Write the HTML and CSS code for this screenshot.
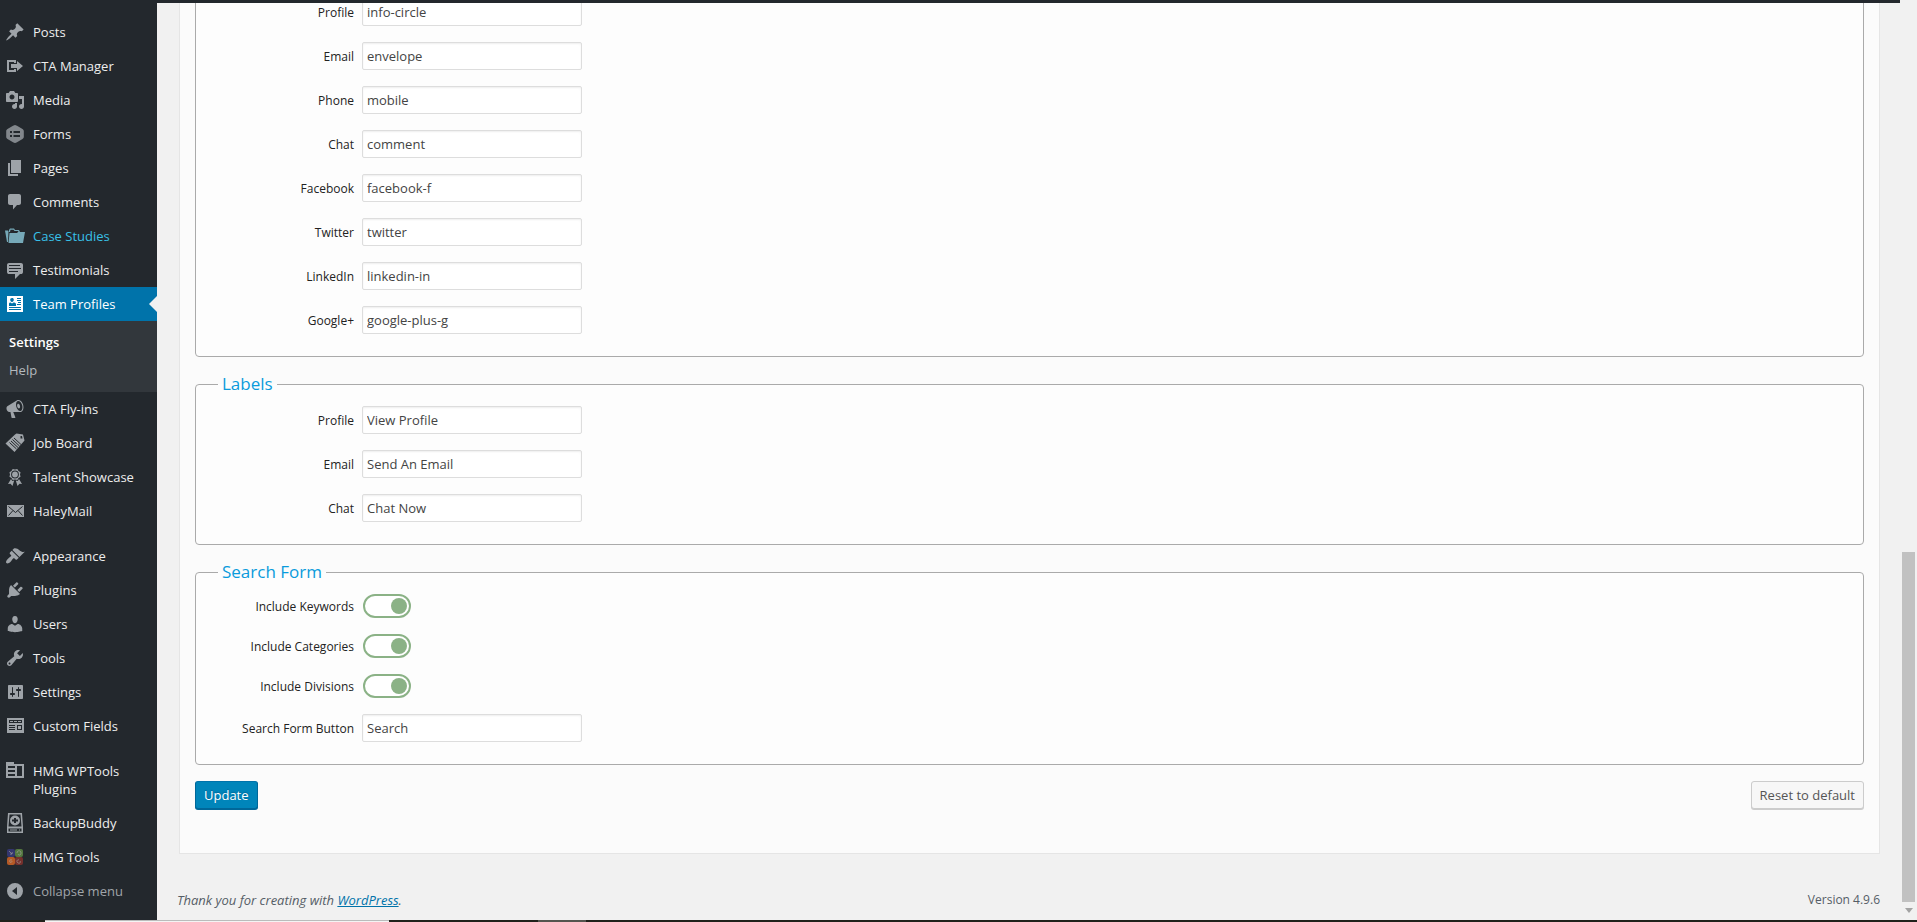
FILE: index.html
```
<!DOCTYPE html>
<html lang="en">
<head>
    <meta charset="UTF-8">
    <meta name="viewport" content="width=device-width, initial-scale=1.0">
    <title>Team Profiles Settings</title>
    <link rel="stylesheet" href="styles.css">
</head>
<body>
    <div class="admin-bar"></div>
    <div class="wrap">
        <nav class="sidebar">
            <ul class="menu">
                <li><a href="#"><svg viewBox="0 0 20 20"><path d="M10.44 3.02l1.82-1.82 6.36 6.35-1.83 1.82c-1.05-.68-2.48-.57-3.41.36l-.75.75c-.92.93-1.04 2.35-.35 3.41l-1.83 1.82-2.41-2.41-2.8 2.79c-.42.42-3.38 2.71-3.8 2.29s1.86-3.39 2.28-3.81l2.79-2.79L4.1 9.36l1.83-1.82c1.05.69 2.48.57 3.4-.36l.75-.75c.93-.92 1.05-2.35.36-3.41z"/></svg><span>Posts</span></a></li>
                <li><a href="#"><svg viewBox="0 0 20 20"><path d="M2 4h9v3H9V6H4v8h5v-1h2v3H2zM6 8h6V5l6 5-6 5v-3H6z"/></svg><span>CTA Manager</span></a></li>
                <li><a href="#"><svg viewBox="0 0 20 20"><path d="M13 11V4c0-.55-.45-1-1-1h-1.67L9 1H5L3.67 3H2c-.55 0-1 .45-1 1v7c0 .55.45 1 1 1h10c.55 0 1-.45 1-1zM7 4.5c1.38 0 2.5 1.12 2.5 2.5S8.38 9.5 7 9.5 4.5 8.38 4.5 7 5.62 4.5 7 4.5zM14 6h5v10.5c0 1.38-1.12 2.5-2.5 2.5S14 17.88 14 16.5s1.12-2.5 2.5-2.5c.17 0 .34.02.5.05V9h-3V6zm-4 8.05V13h2v3.5c0 1.38-1.12 2.5-2.5 2.5S7 17.88 7 16.5 8.12 14 9.5 14c.17 0 .34.02.5.05z"/></svg><span>Media</span></a></li>
                <li><a href="#"><svg class="dim" viewBox="0 0 20 20"><path fill-rule="evenodd" d="M10 1l2 .7 5.5 3.2c.8.5 1.3 1.2 1.3 2v6.2c0 .8-.5 1.5-1.3 2L12 18.3c-1.4.8-2.6.8-4 0l-5.500-3.200c-.8-.5-1.300-1.200-1.300-2V6.900c0-.8.5-1.500 1.300-2L8 1.700zM5 7v2h2V7zm3.500 0v2H15V7zM5 11v2h2v-2zm3.500 0v2H15v-2z"/></svg><span>Forms</span></a></li>
                <li><a href="#"><svg viewBox="0 0 20 20"><path d="M6 15V2h10v13H6zm-1 1h8v2H3V5h2v11z"/></svg><span>Pages</span></a></li>
                <li><a href="#"><svg viewBox="0 0 20 20"><path d="M5 2h9c1.100 0 2 .9 2 2v7c0 1.100-.9 2-2 2h-2l-4 4.500V13H5c-1.100 0-2-.9-2-2V4c0-1.100.9-2 2-2z"/></svg><span>Comments</span></a></li>
                <li class="hover"><a href="#"><svg viewBox="0 0 20 20"><path d="M0 4.500h3l.5 1L3 16H2z"/><path d="M4 6V4l1-1.500h4L10 4h4l1 2h-1.500L13 5H9.500l-1-1.300h-3L5 6z"/><path d="M4.500 7H12l1-1h7l-2 11H3.500z"/></svg><span>Case Studies</span></a></li>
                <li><a href="#"><svg viewBox="0 0 20 20"><path d="M4 3h12c.55 0 1.020.2 1.410.590S18 4.450 18 5v7c0 .55-.2 1.020-.59 1.410S16.550 14 16 14h-1l-5 5v-5H4c-.55 0-1.020-.2-1.410-.59S2 12.550 2 12V5c0-.55.2-1.020.590-1.410S3.450 3 4 3zm11 2H4v1h11V5zm1 3H4v1h12V8zm-3 3H4v1h9v-1z"/></svg><span>Testimonials</span></a></li>
                <li class="current">
                    <a href="#"><svg viewBox="0 0 20 20"><path fill-rule="evenodd" d="M2 2h16v16H2zM7 4c-1.100 0-1.800.8-1.800 1.800S5.900 8 7 8s1.800-1 1.800-2.200S8.100 4 7 4zM4 12h7V9.800C10.500 8.800 9.500 8.500 8.500 8.500L7 9.500l-1.500-1C4.500 8.500 4 9 4 10zM12 4v1h4V4zm0 2v1h4V6zm1 2v1h3V8zm-1 2v1h4v-1zm-8 3v1h12v-1zm0 2v1h12v-1z"/></svg><span>Team Profiles</span></a>
                    <ul class="submenu">
                        <li class="active"><a href="#">Settings</a></li>
                        <li><a href="#">Help</a></li>
                    </ul>
                </li>
                <li><a href="#"><svg viewBox="0 0 20 20"><path d="M18.150 5.940c.46 1.620.380 3.220-.02 4.480-.42 1.280-1.260 2.180-2.300 2.480-.16.060-.26.060-.4.060-.06.020-.12.020-.18.020-.06.020-.14.020-.22.020h-6.800l2.220 5.500c.020.140-.06.260-.14.340-.08.100-.24.160-.34.160H6.950c-.1 0-.26-.06-.34-.16-.08-.08-.16-.2-.14-.34l-1-5.500H4.250l-.02-.02c-.5.060-1.080-.18-1.540-.62s-.88-1.080-1.060-1.880c-.24-.8-.2-1.560-.02-2.200.180-.62.580-1.080 1.060-1.300l.020-.02 9-5.400c.1-.06.180-.1.240-.16.060-.04.140-.08.240-.12.160-.08.280-.12.500-.18 1.040-.3 2.240.100 3.220.980s1.840 2.240 2.260 3.860zm-2.580 5.980h-.02c.4-.1.740-.34 1.040-.7.580-.7.860-1.760.860-3.040 0-.64-.1-1.300-.28-1.980-.34-1.360-1.020-2.500-1.780-3.240s-1.680-1.100-2.460-.88c-.82.220-1.400.960-1.700 2-.32 1.040-.28 2.360.060 3.720.380 1.360 1 2.500 1.800 3.240.780.740 1.620 1.100 2.480.880zm-2.540-7.080c.22-.04.420-.02.620.040.380.160.760.480 1.020 1s.42 1.200.420 1.780c0 .3-.04.560-.12.800-.18.480-.44.840-.86.940-.34.100-.8-.06-1.140-.4s-.64-.86-.78-1.500c-.18-.62-.12-1.240.020-1.720s.48-.84.820-.94z"/></svg><span>CTA Fly-ins</span></a></li>
                <li><a href="#"><svg viewBox="0 0 20 20"><path fill-rule="evenodd" d="M10 1.500L11.500.5 18 1.500l1.500 6L9.500 19 .5 10.500zM15.500 3v2.500h2L17 3z"/><path class="cut" d="M9 5l7 6.500M7.500 6.500l7 6.500M6 8l7 6.500M4.500 9.500l7 6.500"/></svg><span>Job Board</span></a></li>
                <li><a href="#"><svg viewBox="0 0 20 20"><path fill-rule="evenodd" d="M4.460 5.160L5 7.460l-.54 2.290 2.010 1.240L7.700 13l2.300-.54 2.300.540 1.230-2.010 2.010-1.240L15 7.460l.540-2.300-2-1.240-1.240-2.010-2.300.550-2.290-.54-1.250 2zM10 3.600a3.900 3.900 0 110 7.800 3.900 3.900 0 010-7.800z"/><circle cx="10" cy="7.500" r="2.900"/><path d="M6 12l1.300 2 1.900-.5L7.500 19l-2-2.300L3 17zM14 12l-1.300 2-1.900-.5 1.700 5.500 2-2.300L17 17z"/></svg><span>Talent Showcase</span></a></li>
                <li><a href="#"><svg viewBox="0 0 20 20"><path d="M2 4h17v12H2z"/><path class="cut" d="M3.500 5.500l7 6 7-6M3.500 14.500L8 9.500M17.500 14.500L13 9.500"/></svg><span>HaleyMail</span></a></li>
                <li class="group"><a href="#"><svg viewBox="0 0 20 20"><path d="M14.480 11.060L7.410 3.990l1.500-1.500c.5-.56 2.300-.47 3.510.320 1.210.800 1.430 1.280 2.910 2.100 1.180.640 2.450 1.260 4.450.850zm-.71.710L6.700 4.700 4.930 6.470c-.39.390-.39 1.020 0 1.410l1.060 1.060c.39.390.390 1.030 0 1.420-.6.600-1.430 1.110-2.210 1.690-.35.260-.7.530-1.010.840C1.430 14.230.4 16.080 1.400 17.070c.99 1 2.840-.03 4.180-1.360.31-.31.580-.66.850-1.020.57-.78 1.080-1.610 1.690-2.210.39-.39 1.020-.39 1.410 0l1.060 1.060c.39.390 1.020.390 1.410 0z"/></svg><span>Appearance</span></a></li>
                <li><a href="#"><svg viewBox="0 0 20 20"><path d="M13.110 4.360L9.870 7.600 8 5.730l3.240-3.240c.35-.34 1.050-.2 1.560.320.520.510.660 1.210.310 1.550zm-8 1.770l.910-1.120 9.010 9.010-1.190.840c-.71.710-2.630 1.160-3.820 1.160H6.140L4.900 17.260c-.59.590-1.540.590-2.120 0-.59-.58-.59-1.530 0-2.120l1.240-1.240v-3.880c0-1.130.4-3.190 1.090-3.890zm7.260 3.970l3.240-3.240c.34-.35 1.040-.21 1.550.310.520.510.660 1.210.310 1.550l-3.240 3.250z"/></svg><span>Plugins</span></a></li>
                <li><a href="#"><svg viewBox="0 0 20 20"><path d="M10 9.250c-2.270 0-2.730-3.440-2.730-3.440C7 4.020 7.820 2 9.970 2c2.160 0 2.980 2.020 2.710 3.810 0 0-.41 3.440-2.680 3.440zm0 2.570L12.720 10c2.390 0 4.520 2.330 4.520 4.530v2.490s-3.650 1.130-7.240 1.130c-3.650 0-7.240-1.130-7.240-1.130v-2.490c0-2.250 1.940-4.480 4.470-4.480z"/></svg><span>Users</span></a></li>
                <li><a href="#"><svg viewBox="0 0 20 20"><path d="M16.680 9.770c-1.340 1.340-3.300 1.670-4.950.990l-5.410 6.520c-.99.990-2.590.990-3.580 0s-.99-2.590 0-3.570l6.520-5.420c-.68-1.650-.35-3.610.990-4.950 1.280-1.280 3.120-1.620 4.720-1.060l-2.890 2.890 2.820 2.820 2.860-2.870c.53 1.580.180 3.390-1.080 4.650zM3.810 16.210c.4.390 1.040.390 1.430 0 .4-.4.4-1.040 0-1.430-.39-.4-1.030-.4-1.430 0-.39.390-.39 1.030 0 1.430z"/></svg><span>Tools</span></a></li>
                <li><a href="#"><svg viewBox="0 0 20 20"><path d="M18 16V4c0-.55-.45-1-1-1H4c-.55 0-1 .45-1 1v12c0 .55.450 1 1 1h13c.55 0 1-.45 1-1zM8 11h1c.55 0 1 .45 1 1s-.45 1-1 1H8v1.500c0 .28-.22.500-.5.500s-.5-.22-.5-.5V13H6c-.55 0-1-.45-1-1s.45-1 1-1h1V5.500c0-.28.220-.5.500-.5s.5.220.500.500V11zm5-2h-1c-.55 0-1-.45-1-1s.45-1 1-1h1V5.500c0-.28.220-.5.500-.5s.5.220.500.500V7h1c.55 0 1 .45 1 1s-.45 1-1 1h-1v5.500c0 .28-.22.500-.5.500s-.5-.22-.5-.5V9z"/></svg><span>Settings</span></a></li>
                <li><a href="#"><svg viewBox="0 0 20 20"><path fill-rule="evenodd" d="M2 2h17v15H2zM4 4v3h13V4zM4 9v1h6V9zm0 2v1h6v-1zm0 2v1h6v-1zm8-4v5h5V9z"/><path d="M5 5h3v1H5zM9 5h3v1H9zM13 5h3v1h-3zM13 10h3v3h-3z"/></svg><span>Custom Fields</span></a></li>
                <li class="group"><a href="#"><svg viewBox="0 0 20 20"><path fill-rule="evenodd" d="M1 1h8v2h10v14H1zM3 5v2h7V5zm0 4v2h7V9zm0 4v2h7v-2zM12 5v10h5V5z"/></svg><span>HMG WPTools Plugins</span></a></li>
                <li><a href="#"><svg viewBox="0 0 20 20"><path fill-rule="evenodd" d="M3 0h14l1 14v6H2v-6zM4.500 1.500L3.500 13.500h13l-1-12zM3.500 15.500v3h13v-3z"/><path fill-rule="evenodd" d="M10 2.500a5 5 0 110 10 5 5 0 010-10zM9 5v1.500H7v2h2V10h2V8.500h2v-2h-2V5z"/><path d="M5 16.500h7v1H5zM14 16.500h1v1h-1z"/></svg><span>BackupBuddy</span></a></li>
                <li><a href="#"><svg viewBox="0 0 20 20"><rect x="2" y="2" width="8" height="8" rx="2" fill="#34366f"/><rect x="10" y="2" width="8" height="8" rx="2" fill="#54783f"/><rect x="2" y="10" width="8" height="8" rx="2" fill="#b55a26"/><rect x="10" y="10" width="8" height="8" rx="2" fill="#75302c"/><g fill="none" stroke="#a9a7a5" stroke-width=".6"><path d="M4 4l3 3M5 7c2 1 3-1 2-2M12 6c0-3 4-3 4 0s-3 2-3 1M7 13c-2-1-3 1-2 2s2 0 2-1M14 13c-2-1-3 2-1 3s3-1 2-2"/></g></svg><span>HMG Tools</span></a></li>
                <li class="collapse"><button type="button"><svg viewBox="0 0 20 20"><path fill-rule="evenodd" d="M10 2a8 8 0 110 16 8 8 0 010-16zM12 6l-5 4 5 4z"/></svg><span>Collapse menu</span></button></li>
            </ul>
        </nav>

        <main class="content">
            <form class="panel">
                <fieldset>
                    <div class="row"><label for="icon-profile">Profile</label><input type="text" id="icon-profile" value="info-circle"></div>
                    <div class="row"><label for="icon-email">Email</label><input type="text" id="icon-email" value="envelope"></div>
                    <div class="row"><label for="icon-phone">Phone</label><input type="text" id="icon-phone" value="mobile"></div>
                    <div class="row"><label for="icon-chat">Chat</label><input type="text" id="icon-chat" value="comment"></div>
                    <div class="row"><label for="icon-facebook">Facebook</label><input type="text" id="icon-facebook" value="facebook-f"></div>
                    <div class="row"><label for="icon-twitter">Twitter</label><input type="text" id="icon-twitter" value="twitter"></div>
                    <div class="row"><label for="icon-linkedin">LinkedIn</label><input type="text" id="icon-linkedin" value="linkedin-in"></div>
                    <div class="row"><label for="icon-google">Google+</label><input type="text" id="icon-google" value="google-plus-g"></div>
                </fieldset>

                <fieldset>
                    <legend>Labels</legend>
                    <div class="row"><label for="label-profile">Profile</label><input type="text" id="label-profile" value="View Profile"></div>
                    <div class="row"><label for="label-email">Email</label><input type="text" id="label-email" value="Send An Email"></div>
                    <div class="row"><label for="label-chat">Chat</label><input type="text" id="label-chat" value="Chat Now"></div>
                </fieldset>

                <fieldset>
                    <legend>Search Form</legend>
                    <div class="row"><label for="keywords">Include Keywords</label><input type="checkbox" class="toggle" id="keywords" checked></div>
                    <div class="row"><label for="categories">Include Categories</label><input type="checkbox" class="toggle" id="categories" checked></div>
                    <div class="row"><label for="divisions">Include Divisions</label><input type="checkbox" class="toggle" id="divisions" checked></div>
                    <div class="row"><label for="search-button">Search Form Button</label><input type="text" id="search-button" value="Search"></div>
                </fieldset>

                <div class="buttons">
                    <button type="submit" class="button primary">Update</button>
                    <button type="reset" class="button">Reset to default</button>
                </div>
            </form>
            <footer class="footer">
                <em>Thank you for creating with <a href="#">WordPress</a>.</em>
                <span>Version 4.9.6</span>
            </footer>
        </main>

        <div class="scrollbar">
            <div class="thumb"></div>
            <svg class="arrow" viewBox="0 0 8 5"><path d="M0 0h8L4 5z"/></svg>
        </div>
    </div>
    <div class="taskbar"><div class="task"></div><div class="task-open"></div></div>
</body>
</html>
```
FILE: styles.css
```
* {
    box-sizing: border-box;
}
body {
    margin: 0;
    height: 100vh;
    display: flex;
    flex-direction: column;
    overflow: hidden;
    background: #f1f1f1;
    color: #444;
    font-family: "Segoe UI", "Open Sans", sans-serif;
    font-size: 13px;
}
ul {
    list-style: none;
    margin: 0;
    padding: 0;
}

/* frame */
.admin-bar {
    flex: none;
    height: 3px;
    margin-right: 17px;
    background: #23282d;
}
.wrap {
    flex: 1;
    min-height: 0;
    display: flex;
}
.taskbar {
    flex: none;
    height: 2px;
    display: flex;
    padding-left: 45px;
    background: #20201a;
}
.task {
    width: 344px;
    margin-right: 149px;
    border-top: 1px solid #bbb;
    background: #f4f4f4;
}
.task-open {
    width: 48px;
    background: #55554f;
}

/* sidebar */
.sidebar {
    flex: none;
    width: 157px;
    padding-top: 12px;
    background: #23282d;
}
.menu > li > a,
.collapse button {
    position: relative;
    display: flex;
    gap: 8px;
    padding: 8px 5px;
    color: #eee;
    font-size: 13px;
    line-height: 18px;
    text-decoration: none;
}
.menu svg {
    flex: none;
    width: 20px;
    height: 20px;
    margin: -1px 0;
    fill: #9ea3a8;
}
.menu svg.dim {
    fill: #82878c;
}
.menu .cut {
    fill: none;
    stroke: #23282d;
}
.menu .group {
    margin-top: 11px;
}
.menu .hover a {
    color: #38c0e8;
}
.menu .hover svg {
    fill: #76a9b8;
}
.menu .current > a {
    background: #0073aa;
    color: #fff;
}
.menu .current > a::after {
    content: "";
    position: absolute;
    right: 0;
    top: 9px;
    border: 8px solid transparent;
    border-left: 0;
    border-right-color: #f1f1f1;
}
.menu .current svg {
    fill: #fff;
}
.submenu {
    padding: 7px 9px 8px;
    background: #32373c;
}
.submenu a {
    display: block;
    padding: 5px 0;
    color: #b4b9be;
    font-size: 13px;
    line-height: 18px;
    text-decoration: none;
}
.submenu .active a {
    color: #fff;
    font-weight: 600;
}
.collapse button {
    width: 100%;
    border: 0;
    background: none;
    color: #a0a5aa;
    font-family: inherit;
    text-align: left;
    cursor: pointer;
}

/* settings form, kept scrolled to the end */
.content {
    flex: 1;
    min-width: 0;
    display: flex;
    flex-direction: column;
    justify-content: flex-end;
    overflow: hidden;
    padding: 0 20px 0 22px;
}
.panel {
    flex: none;
    padding: 15px 15px 43px;
    border: 1px solid #e5e5e5;
    background: #fbfbfb;
}
fieldset {
    margin: 0 0 16px;
    padding: 11px 20px 22px;
    border: 1px solid #aaa;
    border-radius: 4px;
    background: #fdfdfd;
}
legend {
    padding: 0 4px;
    margin-left: 2px;
    color: #0a9bdc;
    font-size: 17px;
    line-height: 22px;
}
.row {
    display: flex;
    align-items: center;
    gap: 8px;
    margin-bottom: 16px;
}
.row:last-child {
    margin-bottom: 0;
}
.row label {
    width: 138px;
    color: #222;
    font-size: 12px;
    text-align: right;
}
.row input[type="text"] {
    width: 220px;
    height: 28px;
    padding: 3px 4px;
    border: 1px solid #ddd;
    border-radius: 2px;
    background: #fff;
    box-shadow: inset 0 1px 2px rgba(0, 0, 0, 0.07);
    color: #444;
    font-family: inherit;
    font-size: 13px;
}
.toggle {
    appearance: none;
    display: flex;
    justify-content: flex-end;
    width: 48px;
    height: 24px;
    margin: 0 1px;
    padding: 2px;
    border: 2px solid #8bb286;
    border-radius: 12px;
    background: #fff;
}
.toggle::before {
    content: "";
    width: 16px;
    height: 16px;
    border-radius: 50%;
    background: #8bb286;
}
.toggle:not(:checked) {
    justify-content: flex-start;
}
.buttons {
    display: flex;
    justify-content: space-between;
}
.button {
    height: 28px;
    margin-bottom: 1px;
    padding: 0 8px;
    border: 1px solid #ccc;
    border-radius: 3px;
    background: #f7f7f7;
    box-shadow: 0 1px 0 #ccc;
    color: #555;
    font-family: inherit;
    font-size: 13px;
    cursor: pointer;
}
.primary {
    border-color: #0073aa #006799 #006799;
    background: #0085ba;
    box-shadow: 0 1px 0 #006799;
    color: #fff;
    text-shadow: 0 -1px 1px #006799;
}
.footer {
    flex: none;
    display: flex;
    justify-content: space-between;
    padding: 36px 0 10px;
    margin-left: -2px;
    color: #555d66;
    font-size: 12px;
    line-height: 20px;
}
.footer em {
    font-size: 13px;
}
.footer a {
    color: #0073aa;
}

/* scrollbar */
.scrollbar {
    flex: none;
    width: 17px;
    display: flex;
    flex-direction: column;
    justify-content: flex-end;
    align-items: center;
    gap: 6px;
    padding-bottom: 7px;
}
.thumb {
    width: 13px;
    height: 350px;
    background: #c1c1c1;
}
.arrow {
    width: 8px;
    height: 5px;
    fill: #a3a3a3;
}
```
